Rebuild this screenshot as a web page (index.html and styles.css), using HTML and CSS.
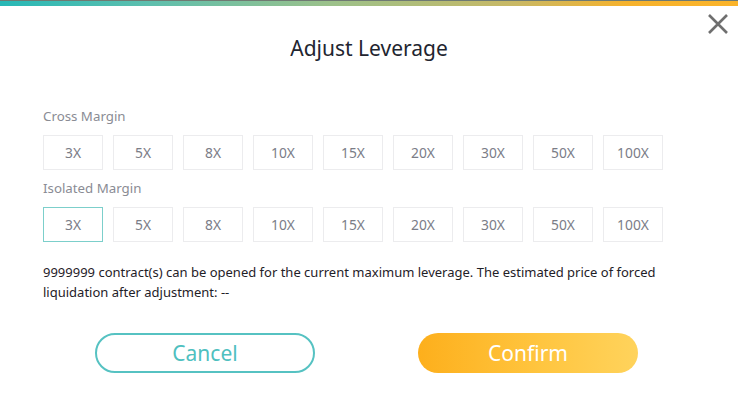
FILE: index.html
```html
<!DOCTYPE html>
<html>
<head>
<meta charset="utf-8">
<link rel="stylesheet" href="styles.css">
</head>
<body>
<div class="topbar"></div>
<div class="dialog">
  <button class="close" aria-label="Close">
    <svg width="22" height="22" viewBox="0 0 22 22"><path d="M2 2 L20 20 M20 2 L2 20" stroke="#6f6f6f" stroke-width="2.6" stroke-linecap="butt" fill="none"/></svg>
  </button>
  <h1 class="title">Adjust Leverage</h1>
  <div class="group">
    <div class="label">Cross Margin</div>
    <div class="options">
      <div class="opt">3X</div><div class="opt">5X</div><div class="opt">8X</div><div class="opt">10X</div><div class="opt">15X</div><div class="opt">20X</div><div class="opt">30X</div><div class="opt">50X</div><div class="opt">100X</div>
    </div>
  </div>
  <div class="group">
    <div class="label">Isolated Margin</div>
    <div class="options">
      <div class="opt active">3X</div><div class="opt">5X</div><div class="opt">8X</div><div class="opt">10X</div><div class="opt">15X</div><div class="opt">20X</div><div class="opt">30X</div><div class="opt">50X</div><div class="opt">100X</div>
    </div>
  </div>
  <p class="info">9999999 contract(s) can be opened for the current maximum leverage. The estimated price of forced liquidation after adjustment: --</p>
  <div class="actions">
    <button class="btn cancel">Cancel</button>
    <button class="btn confirm">Confirm</button>
  </div>
</div>
</body>
</html>
```

FILE: styles.css
```css
html, body {
  margin: 0;
  padding: 0;
  background: #ffffff;
  width: 738px;
  height: 410px;
  overflow: hidden;
  font-family: "Noto Sans", "Open Sans", sans-serif;
}
.topbar {
  height: 6px;
  border-top: 1px solid #6f7a72;
  box-sizing: border-box;
  background: linear-gradient(90deg, #27b8b6 0%, #5dbfae 20%, #9cc18a 45%, #c9b864 70%, #f6b22c 85%, #fbb42a 100%);
}
.dialog {
  position: relative;
  padding: 0 0 0 43px;
}
.close {
  position: absolute;
  top: 7px;
  right: 9px;
  width: 22px;
  height: 22px;
  padding: 0;
  border: 0;
  background: none;
  display: flex;
}
.title {
  margin: 0;
  padding-top: 28px;
  height: 30px;
  line-height: 28px;
  text-align: center;
  font-size: 21px;
  font-weight: 400;
  color: #222530;
  padding-right: 43px;
}
.group {
  display: flex;
  flex-direction: column;
}
.label {
  font-size: 13.3px;
  color: #8a8c94;
  line-height: 18px;
}
.title + .group .label { margin-top: 43px; }
.options {
  display: flex;
  gap: 10px;
  margin-top: 10px;
  margin-bottom: 9px;
}
.opt {
  width: 60px;
  height: 35px;
  box-sizing: border-box;
  border: 1px solid #ececee;
  display: flex;
  align-items: center;
  justify-content: center;
  font-size: 13.8px;
  color: #7b7d87;
}
.opt.active {
  border-color: #7ccfcb;
}
.info {
  margin: 11px 60px 0 0;
  font-size: 13px;
  line-height: 20px;
  color: #1f2128;
}
.actions {
  display: flex;
  gap: 103px;
  margin-top: 31px;
  padding-left: 52px;
}
.btn {
  width: 220px;
  height: 40px;
  border-radius: 20px;
  font-family: inherit;
  font-size: 21px;
  box-sizing: border-box;
  padding: 0;
}
.cancel {
  background: #ffffff;
  border: 2px solid #56c2c2;
  color: #4fc0bf;
}
.confirm {
  border: 0;
  color: #ffffff;
  background: linear-gradient(90deg, #fdaf1c 0%, #ffc53f 55%, #ffd35c 100%);
}
```
